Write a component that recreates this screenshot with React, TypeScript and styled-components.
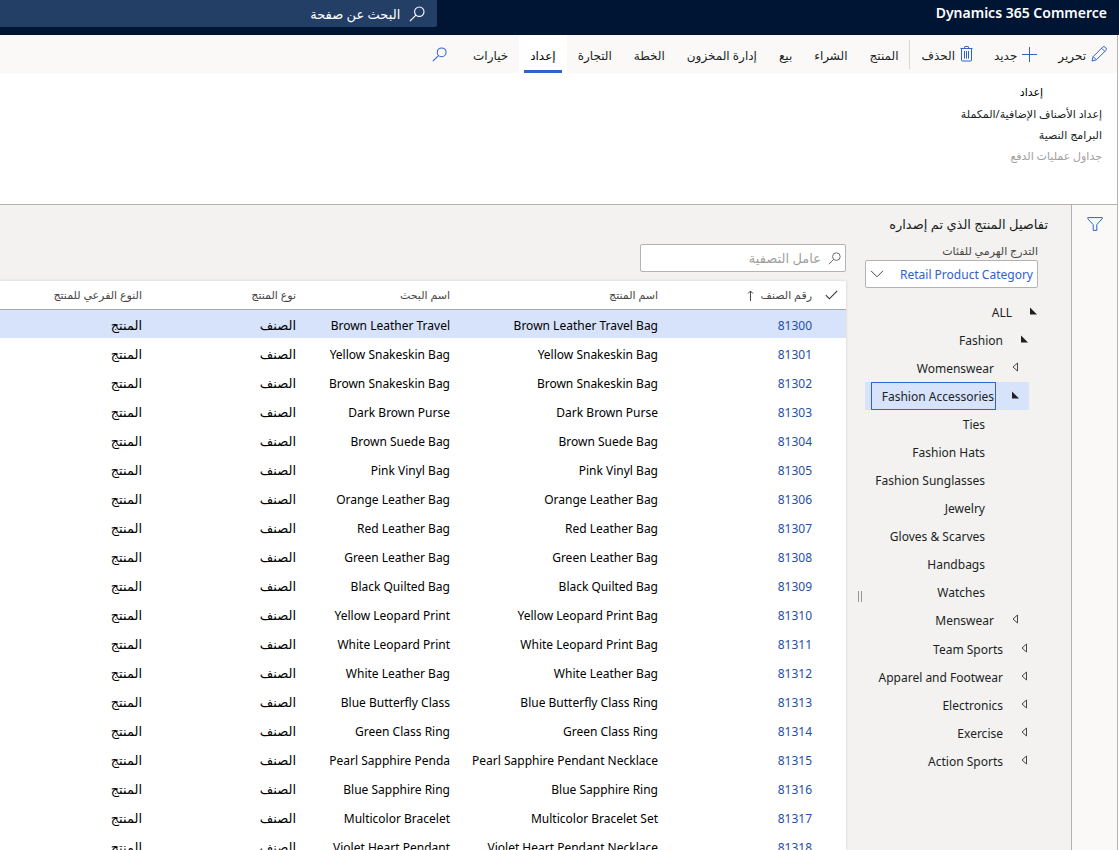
import React from "react";
import styled, { createGlobalStyle } from "styled-components";

const GlobalStyle = createGlobalStyle`
  *, *::before, *::after { box-sizing: border-box; }
  html, body { margin: 0; padding: 0; }
  body {
    background: #ffffff;
    color: #201f1e;
    font-family: "Noto Sans", "DejaVu Sans", sans-serif;
    font-size: 12px;
    line-height: 20px;
  }
  button, input, select {
    font: inherit;
    color: inherit;
    margin: 0;
    border: 0;
    padding: 0;
    background: none;
  }
  ul { list-style: none; margin: 0; padding: 0; }
`;

const arabicSize = "13px";
const arabicSmall = "11px";
const blue = "#2f62cc";

const Shell = styled.div`
  display: flex;
  flex-direction: column;
  height: 100vh;
  overflow: hidden;
`;

const TopBar = styled.header`
  display: flex;
  justify-content: space-between;
  align-items: flex-start;
  flex: none;
  height: 35px;
  padding-right: 12px;
  background: #001433;
  color: #ffffff;
`;

const Brand = styled.h1`
  margin: 0;
  padding-top: 3px;
  font-size: 14px;
  line-height: 20px;
  font-weight: 600;
`;

const PageSearch = styled.label`
  display: flex;
  align-items: center;
  gap: 9px;
  width: 39.5%;
  height: 27px;
  padding-right: 12px;
  background: #243f66;
  border-bottom-right-radius: 2px;
`;

const PageSearchInput = styled.input`
  flex: 1;
  min-width: 0;
  height: 27px;
  font-size: ${arabicSize};
  outline: none;
  &::placeholder { color: #ffffff; opacity: 1; }
`;

const Frame = styled.div`
  display: flex;
  flex-direction: column;
  flex: 1;
  min-height: 0;
  margin-right: 1px;
  border-right: 1px solid #b5b3b1;
`;

const ActionBar = styled.nav`
  display: flex;
  align-items: stretch;
  flex: none;
  height: 38px;
  padding-right: 10px;
  background: #faf9f8;
`;

const Commands = styled.div`
  display: flex;
  gap: 21px;
  padding-left: 11px;
`;

const Command = styled.button`
  display: flex;
  align-items: center;
  gap: 5px;
`;

const CommandText = styled.span`
  padding-top: 3px;
`;

const Divider = styled.span`
  flex: none;
  width: 1px;
  margin: 5px 0 4px;
  background: #d9d7d5;
`;

const Tab = styled.button<{ $active?: boolean }>`
  display: flex;
  padding: 0 5px;
  background: ${(p) => (p.$active ? "#ffffff" : "transparent")};
`;

const TabText = styled.span<{ $active?: boolean }>`
  display: flex;
  align-items: center;
  height: 38px;
  padding: 6px 6px 0;
  color: ${(p) => (p.$active ? "#000000" : "#201f1e")};
  border-bottom: 3px solid ${(p) => (p.$active ? blue : "transparent")};
`;

const IconButton = styled.button`
  display: flex;
  align-items: center;
  justify-content: center;
  color: ${blue};
`;

const BarSearch = styled(IconButton)`
  margin-right: 15px;
`;

const Ribbon = styled.section`
  display: flex;
  flex: none;
  height: 132px;
  padding: 9px 15px 0 0;
  border-bottom: 1px solid #b5b3b1;
`;

const RibbonGroup = styled.div`
  display: flex;
  flex-direction: column;
  align-items: flex-start;
  font-size: ${arabicSmall};
`;

const RibbonTitle = styled.h2`
  align-self: center;
  margin: 0 0 1px;
  font-size: ${arabicSmall};
  line-height: 20px;
  font-weight: 400;
  color: #000000;
`;

const RibbonItem = styled.button`
  height: 21px;
  line-height: 20px;
  &:disabled { color: #a19f9d; }
`;

const Body = styled.div`
  display: flex;
  flex: 1;
  min-height: 0;
  background: #f3f2f1;
`;

const Rail = styled.aside`
  flex: none;
  width: 46px;
  padding: 12px 14px 0 0;
  background: #faf9f8;
  border-left: 1px solid #b5b3b1;
`;

const Side = styled.aside`
  flex: none;
  width: 206px;
  padding-top: 9px;
`;

const SideTitle = styled.h2`
  margin: 0 23px 8px 0;
  font-size: ${arabicSize};
  line-height: 20px;
  font-weight: 400;
  white-space: nowrap;
`;

const Field = styled.div`
  margin: 0 33px 10px 0;
`;

const FieldLabel = styled.label`
  display: block;
  font-size: ${arabicSmall};
  line-height: 18px;
  color: #484644;
`;

const SelectBox = styled.div`
  display: grid;
  align-items: center;
  height: 28px;
  background: #ffffff;
  border: 1px solid #b5b3b1;
  border-radius: 2px;
  & > * { grid-area: 1 / 1; }
  & > svg { justify-self: end; margin-left: 4px; pointer-events: none; }
`;

const Select = styled.select`
  appearance: none;
  width: 100%;
  height: 26px;
  padding: 2px 4px 0 24px;
  color: ${blue};
  outline: none;
`;

const Tree = styled.div`
  margin-right: 24px;
`;

const Branch = styled.ul<{ $depth: number }>`
  margin-right: ${(p) => (p.$depth ? 9 : 0)}px;
  padding-bottom: ${(p) => (p.$depth === 2 ? 1 : 0)}px;
`;

const TreeRow = styled.div<{ $selected?: boolean }>`
  display: flex;
  align-items: center;
  height: 28px;
  background: ${(p) => (p.$selected ? "#d7e3fb" : "transparent")};
  white-space: nowrap;
`;

const Toggle = styled.button`
  display: flex;
  flex: none;
  align-items: center;
  justify-content: flex-start;
  width: 33px;
  height: 28px;
  padding: 0 10px 3px 0;
`;

const TreeLabel = styled.button<{ $selected?: boolean }>`
  height: 28px;
  padding: 2px 1px 0 10px;
  border: 1px solid ${(p) => (p.$selected ? blue : "transparent")};
`;

const Splitter = styled.div`
  display: flex;
  align-items: center;
  flex: none;
  width: 19px;
  padding: 138px 3px 0 0;
`;

const Grip = styled.span`
  width: 4px;
  height: 11px;
  border: solid #979593;
  border-width: 0 1px;
`;

const Main = styled.main`
  display: flex;
  flex-direction: column;
  flex: 1;
  min-width: 0;
  padding-top: 39px;
`;

const FilterBox = styled.label`
  display: flex;
  align-items: center;
  flex: none;
  gap: 7px;
  width: 206px;
  height: 28px;
  margin-bottom: 9px;
  padding: 0 4px;
  background: #ffffff;
  border: 1px solid #b5b3b1;
  border-radius: 2px;
  color: #605e5c;
`;

const FilterInput = styled.input`
  flex: 1;
  min-width: 0;
  height: 26px;
  font-size: ${arabicSize};
  outline: none;
  &::placeholder { color: #a19f9d; opacity: 1; }
`;

const GridPanel = styled.div`
  flex: 1;
  min-height: 0;
  overflow: hidden;
  background: #ffffff;
  box-shadow: 0 0 3px rgba(0, 0, 0, 0.14);
`;

const Table = styled.table`
  width: 100%;
  table-layout: fixed;
  border-collapse: separate;
  border-spacing: 0;
`;

const Col = styled.col<{ $w?: number }>`
  width: ${(p) => (p.$w ? p.$w + "px" : "auto")};
`;

const HeadCell = styled.th`
  height: 29px;
  padding: 0 8px 0 0;
  border-bottom: 1px solid #a9a7b0;
  text-align: right;
  font-size: ${arabicSmall};
  font-weight: 400;
  color: #484644;
  white-space: nowrap;
`;

const HeadButton = styled.button`
  display: flex;
  align-items: center;
  gap: 7px;
`;

const Row = styled.tr<{ $selected?: boolean }>`
  background: ${(p) => (p.$selected ? "#d7e3fb" : "#ffffff")};
`;

const Cell = styled.td<{ $arabic?: boolean }>`
  height: 29px;
  padding: ${(p) => (p.$arabic ? 2 : 4)}px 8px 0 0;
  border-bottom: 1px solid #ffffff;
  text-align: right;
  line-height: 20px;
  font-size: ${(p) => (p.$arabic ? arabicSize : "12px")};
  color: #000000;
  white-space: nowrap;
`;

const ItemLink = styled.a`
  color: #1f4fa8;
  text-decoration: none;
`;

const SearchIcon = ({ size = 15 }: { size?: number }) => (
  <svg width={size} height={size} viewBox="0 0 16 16" fill="none" stroke="currentColor" strokeWidth="1.1">
    <circle cx="10.3" cy="5.7" r="4.7" />
    <path d="M6.9 9.1 0.9 15.1" />
  </svg>
);

const PencilIcon = () => (
  <svg width="16" height="16" viewBox="0 0 16 16" fill="none" stroke={blue} strokeWidth="1" strokeLinejoin="round">
    <path d="M1 15l1.2-4.4L11.6 1.2a1.8 1.8 0 0 1 2.6 0l.6.6a1.8 1.8 0 0 1 0 2.6L5.4 13.8zM2.2 10.6l3.2 3.2M10.6 2.2l3.2 3.2" />
  </svg>
);

const PlusIcon = () => (
  <svg width="15" height="15" viewBox="0 0 15 15" fill="none" stroke={blue} strokeWidth="1">
    <path d="M7.5 0v15M0 7.5h15" />
  </svg>
);

const TrashIcon = () => (
  <svg width="13" height="16" viewBox="0 0 13 16" fill="none" stroke={blue} strokeWidth="1">
    <path d="M0.5 2.5h12M4.5 2.5v-1.4q0-.6.6-.6h2.8q.6 0 .6.6v1.4M1.5 2.5v11.6q0 .9.9.9h8.2q.9 0 .9-.9V2.5M4.5 5v7.6M6.5 5v7.6M8.5 5v7.6" />
  </svg>
);

const FunnelIcon = () => (
  <svg width="16" height="14" viewBox="0 0 16 14" fill="none" stroke={blue} strokeWidth="1" strokeLinejoin="round">
    <path d="M0.8 0.6h14.4v1.2L9.8 7.6v5.8H6.2V7.6L0.8 1.8z" />
  </svg>
);

const ChevronIcon = () => (
  <svg width="14" height="8" viewBox="0 0 14 8" fill="none" stroke="#484644" strokeWidth="1">
    <path d="M1 0.8l6 6 6-6" />
  </svg>
);

const CheckIcon = () => (
  <svg width="13" height="10" viewBox="0 0 13 10" fill="none" stroke="#323130" strokeWidth="1.1">
    <path d="M0.8 5.2l3.6 3.6L12.2 0.8" />
  </svg>
);

const SortIcon = () => (
  <svg width="7" height="11" viewBox="0 0 7 11" fill="none" stroke="#484644" strokeWidth="1">
    <path d="M3.5 11V1M1 3.5l2.5-2.5 2.5 2.5" />
  </svg>
);

const OpenIcon = () => (
  <svg width="8" height="8" viewBox="0 0 8 8">
    <path d="M1 0.5v7h7z" fill="#201f1e" />
  </svg>
);

const ClosedIcon = () => (
  <svg width="8" height="10" viewBox="0 0 8 10" fill="none" stroke="#484644">
    <path d="M6.5 1v8L2 5z" />
  </svg>
);

type Node = { name: string; state?: "open" | "closed"; selected?: boolean; children?: Node[] };

const tree: Node[] = [
  {
    name: "ALL",
    state: "open",
    children: [
      {
        name: "Fashion",
        state: "open",
        children: [
          { name: "Womenswear", state: "closed" },
          {
            name: "Fashion Accessories",
            state: "open",
            selected: true,
            children: [
              { name: "Ties" },
              { name: "Fashion Hats" },
              { name: "Fashion Sunglasses" },
              { name: "Jewelry" },
              { name: "Gloves & Scarves" },
              { name: "Handbags" },
              { name: "Watches" },
            ],
          },
          { name: "Menswear", state: "closed" },
        ],
      },
      { name: "Team Sports", state: "closed" },
      { name: "Apparel and Footwear", state: "closed" },
      { name: "Electronics", state: "closed" },
      { name: "Exercise", state: "closed" },
      { name: "Action Sports", state: "closed" },
    ],
  },
];

const TreeBranch = ({ nodes, depth = 0 }: { nodes: Node[]; depth?: number }) => (
  <Branch $depth={depth}>
    {nodes.map((n) => (
      <li key={n.name}>
        <TreeRow $selected={n.selected}>
          <Toggle aria-label={n.name} tabIndex={n.state ? 0 : -1}>
            {n.state === "open" && <OpenIcon />}
            {n.state === "closed" && <ClosedIcon />}
          </Toggle>
          <TreeLabel $selected={n.selected}>{n.name}</TreeLabel>
        </TreeRow>
        {n.children && <TreeBranch nodes={n.children} depth={depth + 1} />}
      </li>
    ))}
  </Branch>
);

const products = [
  "Brown Leather Travel Bag",
  "Yellow Snakeskin Bag",
  "Brown Snakeskin Bag",
  "Dark Brown Purse",
  "Brown Suede Bag",
  "Pink Vinyl Bag",
  "Orange Leather Bag",
  "Red Leather Bag",
  "Green Leather Bag",
  "Black Quilted Bag",
  "Yellow Leopard Print Bag",
  "White Leopard Print Bag",
  "White Leather Bag",
  "Blue Butterfly Class Ring",
  "Green Class Ring",
  "Pearl Sapphire Pendant Necklace",
  "Blue Sapphire Ring",
  "Multicolor Bracelet Set",
  "Violet Heart Pendant Necklace",
];

// Search names hold at most 20 characters.
const searchName = (name: string) => name.slice(0, 20).trim();

const tabs = ["المنتج", "الشراء", "بيع", "إدارة المخزون", "الخطة", "التجارة", "إعداد", "خيارات"];

export default function App() {
  return (
    <Shell dir="rtl" lang="ar">
      <GlobalStyle />
      <TopBar>
        <Brand dir="ltr">Dynamics 365 Commerce</Brand>
        <PageSearch>
          <SearchIcon size={16} />
          <PageSearchInput placeholder="البحث عن صفحة" aria-label="البحث عن صفحة" />
        </PageSearch>
      </TopBar>
      <Frame>
        <ActionBar>
          <Commands>
            <Command><PencilIcon /><CommandText>تحرير</CommandText></Command>
            <Command><PlusIcon /><CommandText>جديد</CommandText></Command>
            <Command><TrashIcon /><CommandText>الحذف</CommandText></Command>
          </Commands>
          <Divider />
          {tabs.map((t) => (
            <Tab key={t} $active={t === "إعداد"}>
              <TabText $active={t === "إعداد"}>{t}</TabText>
            </Tab>
          ))}
          <BarSearch aria-label="بحث"><SearchIcon /></BarSearch>
        </ActionBar>
        <Ribbon>
          <RibbonGroup>
            <RibbonTitle>إعداد</RibbonTitle>
            <RibbonItem>إعداد الأصناف الإضافية/المكملة</RibbonItem>
            <RibbonItem>البرامج النصية</RibbonItem>
            <RibbonItem disabled>جداول عمليات الدفع</RibbonItem>
          </RibbonGroup>
        </Ribbon>
        <Body>
          <Rail>
            <IconButton aria-label="تصفية"><FunnelIcon /></IconButton>
          </Rail>
          <Side>
            <SideTitle>تفاصيل المنتج الذي تم إصداره</SideTitle>
            <Field>
              <FieldLabel htmlFor="hierarchy">التدرج الهرمي للفئات</FieldLabel>
              <SelectBox>
                <Select id="hierarchy" defaultValue="retail">
                  <option value="retail">Retail Product Category</option>
                </Select>
                <ChevronIcon />
              </SelectBox>
            </Field>
            <Tree>
              <TreeBranch nodes={tree} />
            </Tree>
          </Side>
          <Splitter><Grip /></Splitter>
          <Main>
            <FilterBox>
              <SearchIcon size={13} />
              <FilterInput placeholder="عامل التصفية" aria-label="عامل التصفية" />
            </FilterBox>
            <GridPanel>
              <Table>
                <colgroup>
                  <Col $w={26} />
                  <Col $w={154} />
                  <Col $w={208} />
                  <Col $w={154} />
                  <Col $w={154} />
                  <Col />
                </colgroup>
                <thead>
                  <tr>
                    <HeadCell><HeadButton aria-label="تحديد الكل"><CheckIcon /></HeadButton></HeadCell>
                    <HeadCell><HeadButton>رقم الصنف<SortIcon /></HeadButton></HeadCell>
                    <HeadCell>اسم المنتج</HeadCell>
                    <HeadCell>اسم البحث</HeadCell>
                    <HeadCell>نوع المنتج</HeadCell>
                    <HeadCell>النوع الفرعي للمنتج</HeadCell>
                  </tr>
                </thead>
                <tbody>
                  {products.map((name, i) => (
                    <Row key={name} $selected={i === 0}>
                      <Cell />
                      <Cell><ItemLink href="#">{81300 + i}</ItemLink></Cell>
                      <Cell>{name}</Cell>
                      <Cell>{searchName(name)}</Cell>
                      <Cell $arabic>الصنف</Cell>
                      <Cell $arabic>المنتج</Cell>
                    </Row>
                  ))}
                </tbody>
              </Table>
            </GridPanel>
          </Main>
        </Body>
      </Frame>
    </Shell>
  );
}
